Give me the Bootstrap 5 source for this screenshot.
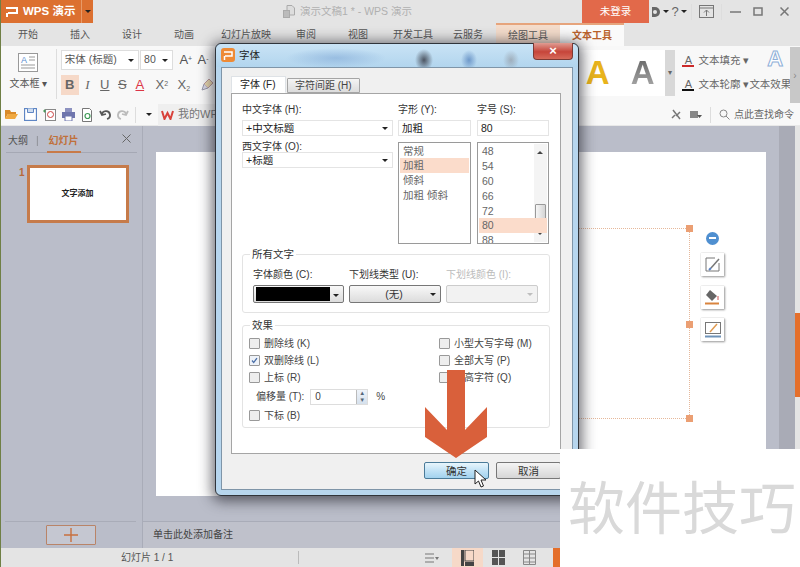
<!DOCTYPE html>
<html lang="zh-CN">
<head>
<meta charset="UTF-8">
<title>WPS 演示 - 字体</title>
<link href="https://cdn.jsdelivr.net/npm/bootstrap@5.3.3/dist/css/bootstrap.min.css" rel="stylesheet">
<style>
  html, body { width: 800px; height: 567px; overflow: hidden; }
  body { font-family: "Liberation Sans", "Noto Sans CJK SC", sans-serif; font-size: 10px; color: #555; background: #e4e4e4; position: relative; }
  .app { width: 800px; height: 567px; border-left: 1px solid #6f7f45; }

  /* title bar */
  .titlebar { height: 23px; background: #e4e4e4; }
  .wps-btn { width: 92px; height: 23px; background: #dc7030; color: #fff; font-size: 11.5px; font-weight: 700; }
  .wps-btn .caret-box { width: 12px; border-left: 1px solid #e89a68; height: 23px; }
  .wps-caret { border-top-color: #fff; }
  .doc-title { width: 489px; color: #b0b0b0; font-size: 10.5px; padding-left: 190px; gap: 5px; white-space: nowrap; }
  .login-btn { width: 67px; height: 23px; background: #e2694a; color: #fff; font-size: 10.5px; }
  .win-tools { display: grid; grid-template-columns: 14px 6px 12px 6px 8px 22px 8px 21px 23px 31px; flex: 1; height: 23px; align-items: center; justify-items: center; color: #666; font-size: 13px; }

  /* tabs */
  .tabrow { height: 23px; display: grid; grid-template-columns: 1px 52px 52px 52px 52px 72px 48px 56px 54px 56px 64px 64px; background: #e4e4e4; font-size: 10px; text-align: center; line-height: 23px; color: #555; }
  .tab-draw { background: #f4dccb; border-top: 2px solid #e6a47c; line-height: 21px; }
  .tab-text { background: #fafafa; border-top: 2px solid #e6a47c; line-height: 21px; color: #b9622d; font-weight: 700; }

  /* ribbon */
  .ribbon { height: 58px; background: #f8f8f8; }
  .rb-box { width: 56px; border-right: 1px solid #ddd; margin-top: 3px; height: 50px; }
  .rb-font { width: 155px; padding: 4px 0 0 4px; }
  .rb-combo { height: 20px; border: 1px solid #ddd; background: #fff; font-size: 10.5px; padding-left: 3px; white-space: nowrap; }
  .rb-face { width: 81px; }
  .rb-size { width: 34px; margin-left: 1px; }
  .rb-grow { width: 18px; font-size: 13px; color: #555; text-align: center; }
  .rb-fmt { display: grid; grid-template-columns: 18px 17px 18px 17px 18px 26px 18px 30px; justify-items: center; align-items: center; height: 18px; margin-top: 5px; font-size: 13px; color: #666; }
  .fmt-b { width: 18px; background: #f6d9c8; font-weight: 700; text-align: center; }
  .fmt-i { font-family: "Liberation Serif", serif; }
  .fmt-sup { font-size: 7px; }
  .gallery { margin-left: 368px; width: 86px; height: 46px; background: #fff; margin-top: 4px; font-size: 33px; font-weight: 700; line-height: 46px; }
  .gold-a { color: #e8b31c; margin-left: 6px; }
  .grey-a { background: linear-gradient(#555, #bbb); -webkit-background-clip: text; background-clip: text; color: transparent; margin-left: 21px; }
  .gal-more { width: 10px; height: 46px; background: #d8d8d8; margin-top: 4px; color: #666; font-size: 8px; }
  .rb-fill { width: 115px; font-size: 10.5px; padding: 2px 0 0 7px; color: #666; line-height: 24px; overflow: hidden; white-space: nowrap; }
  .fill-a { width: 12px; height: 12px; line-height: 11px; text-align: center; font-size: 11px; margin-right: 4px; display: inline-block; }
  .fill-red { border-bottom: 2px solid #cc2a2a; }
  .fill-blk { border-bottom: 2px solid #111; }
  .fx-a { font-size: 22px; font-weight: 700; line-height: 22px; color: #fff; -webkit-text-stroke: 1px #8fb0d8; margin-right: 7px; }
  .rb-side { width: 10px; height: 56px; background: #c8c8c8; color: #888; margin-top: 1px; }

  /* quick access */
  .quickbar { height: 22px; background: #f8f8f8; padding: 0 6px 0 4px; border-bottom: 1px solid #e8e8e8; gap: 6px; }
  .quickbar > * { flex: none; }
  .qa-sep { width: 1px; height: 16px; background: #ddd; }
  .qa-wps { width: 70px; height: 22px; background: #efefef; font-size: 11px; color: #777; padding-left: 3px; white-space: nowrap; }
  .qa-right { font-size: 10px; color: #666; white-space: nowrap; }

  /* workspace */
  .workspace { height: 422px; background: #babdc9; }
  .left-pane { width: 142px; border-right: 1px solid #a9acb8; }
  .pane-head { height: 27px; margin: 0 5px; border-bottom: 1px solid #a5a8b4; font-size: 10px; padding: 0 2px; line-height: 29px; color: #555; }
  .pane-on { color: #c0703a; font-weight: 700; border-bottom: 2px solid #c87a48; height: 27px; padding: 0 2px; }
  .thumb-wrap { padding: 12px 0 0 18px; color: #b8683a; font-weight: 700; font-size: 10px; }
  .thumb { width: 102px; height: 58px; margin-left: 2px; border: 3px solid #c67b4a; background: #fff; color: #222; font-weight: 700; font-size: 8px; }
  .pane-foot { height: 27px; margin: 0 6px 0 4px; border-top: 1px solid #a9acb8; }
  .add-btn { width: 50px; height: 20px; padding: 0; border: 1px solid #b98468; border-radius: 1px; background: #c5c7d1; line-height: 16px; }
  .main-pane { width: 657px; }
  .canvas-row { height: 395px; }
  .canvas { width: 623px; padding: 26px 0 0 13px; }
  .slide { width: 610px; height: 344px; background: #fff; position: relative; }
  .sel-frame { position: absolute; left: 330px; top: 76px; width: 204px; height: 191px; border: 1px dotted #e6b89a; }
  .handle { position: absolute; width: 7px; height: 7px; background: #eb9f73; }
  .h-a { right: -4px; top: -4px; }
  .h-b { right: -4px; top: 92px; }
  .h-c { right: -4px; bottom: -4px; }
  .minus-dot { position: absolute; left: 550px; top: 80px; width: 13px; height: 13px; border-radius: 50%; background: #4f8fd0; }
  .minus-dot::after { content: ""; position: absolute; left: 3px; top: 5px; width: 7px; height: 2px; background: #fff; }
  .float-btn { position: absolute; left: 545px; width: 23px; height: 23px; background: #fff; box-shadow: 1px 1px 2px #999, 0 0 1px #bbb; }
  .fb-1 { top: 101px; }
  .fb-2 { top: 134px; }
  .fb-3 { top: 166px; }
  .track-a { width: 13px; background: #babdc9; }
  .track-b { width: 16px; background: #a9abb6; }
  .track-c { width: 5px; background: #e4e4e4; position: relative; }
  .side-tab { position: absolute; left: 0; top: 187px; width: 5px; height: 84px; background: #e46f2b; }
  .notes { height: 27px; border-top: 1px solid #a9acb8; padding-left: 10px; line-height: 26px; font-size: 10px; color: #444; background: #bfc1cb; }

  /* status bar */
  .statusbar { height: 19px; background: #e4e4e4; font-size: 10px; color: #555; }
  .st-count { width: 297px; padding-left: 120px; }
  .st-sep { width: 1px; height: 13px; background: #bbb; }
  .st-order { margin-left: 126px; width: 27px; }
  .st-view { width: 31px; height: 19px; }
  .st-view-on { background: #f6d9c8; }
  .st-orange { width: 7px; height: 19px; background: #e46f2b; margin-left: 8px; }

  /* dialog */
  .fdlg { position: absolute; left: 215px; top: 43px; width: 364px; height: 453px; border: 1px solid #30343a; border-radius: 6px; box-shadow: 0 2px 14px 3px rgba(30, 30, 40, .65); background: #b7d6ee; padding: 0 5px 6px; color: #333; font-size: 10px; }
  .fdlg-title { height: 23px; margin: 0 -5px; padding: 4px 0 0 5px; border-radius: 6px 6px 0 0; font-size: 10.5px; color: #222; gap: 4px; background:
      radial-gradient(ellipse 9px 11px at 208px 16px, rgba(40, 40, 50, .75), transparent),
      radial-gradient(ellipse 8px 10px at 253px 16px, rgba(50, 100, 170, .55), transparent),
      radial-gradient(ellipse 8px 10px at 295px 16px, rgba(120, 110, 110, .4), transparent),
      radial-gradient(ellipse 50px 10px at 120px 14px, rgba(130, 170, 215, .6), transparent),
      linear-gradient(#c9e3f5, #b2d5ee); }
  .fdlg-logo { width: 14px; height: 14px; border-radius: 3px; background: #ee8a35; }
  .fdlg-close { position: absolute; right: 5px; top: -1px; width: 40px; height: 17px; border: 1px solid #7d3a34; border-top: 0; border-radius: 0 0 4px 4px; background: linear-gradient(#e09c92, #c6453a 55%, #d66a5a); color: #fff; font-size: 13px; font-weight: 700; line-height: 15px; text-align: center; }
  .fdlg-client { height: 423px; background: #f0f0f0; border: 1px solid #7f95a8; padding: 9px 11px 0 9px; }
  .fdlg-tabs { height: 16px; border: 0; gap: 1px; position: relative; z-index: 1; font-size: 10px; }
  .fdlg-tabs .nav-link { border: 1px solid #a5a5a5; border-radius: 1px 1px 0 0; padding: 0 0 0 7px; color: #444; background: linear-gradient(#f4f4f4, #dcdcdc); height: 15px; line-height: 14px; margin-top: 1px; width: 73px; }
  .fdlg-tabs .nav-link.active { background: #fff; border-bottom-color: #fff; height: 17px; margin-top: -1px; width: 55px; color: #222; line-height: 16px; padding-left: 8px; }
  .fdlg-panel { height: 361px; background: #fff; border: 1px solid #a5a5a5; padding: 10px 10px 0 10px; }
  .fnt-grid { display: grid; grid-template-columns: 151px 73px 73px; column-gap: 5px; }
  .fnt-size { margin-left: 1px; }
  .fnt-label { height: 16px; line-height: 12px; color: #333; white-space: nowrap; }
  .fnt-label2 { height: 11px; line-height: 11px; margin-top: 5px; }
  .fnt-combo { height: 16px; border: 1px solid #e4e4e4; padding-left: 3px; font-size: 10.5px; line-height: 14px; color: #222; background: #fff; }
  .caret-dn { width: 0; height: 0; border-left: 3px solid transparent; border-right: 3px solid transparent; border-top: 3px solid #222; margin-right: 4px; }
  .fnt-list { height: 102px; margin-top: 6px; border: 1px solid #9a9a9a; border-radius: 0; padding-top: 1px; overflow: hidden; position: relative; }
  .fnt-list .list-group-item { border: 0; border-radius: 0; padding: 0 0 0 3px; height: 15px; line-height: 15px; font-size: 10.5px; color: #666; background: transparent; margin: 0 1px; flex: none; }
  .fnt-list .list-group-item.active { background: #fbdccb; color: #666; }
  .fnt-scroll { position: absolute; right: 1px; top: 1px; bottom: 1px; width: 13px; background: #f4f4f4; }
  .fnt-thumb { position: absolute; left: 1px; top: 60px; width: 11px; height: 16px; border: 1px solid #999; border-radius: 1px; background: linear-gradient(90deg, #f6f6f6, #d5d5d5); }
  .sb-up, .sb-dn { position: absolute; left: 3px; width: 0; height: 0; border-left: 3px solid transparent; border-right: 3px solid transparent; }
  .sb-up { top: 7px; border-bottom: 3px solid #444; }
  .sb-dn { bottom: 7px; border-top: 3px solid #444; }
  .fgroup { position: relative; border: 1px solid #e3e3e3; border-radius: 3px; margin-top: 10px; }
  .fgroup-all { height: 59px; padding: 14px 0 0 10px; }
  .fgroup-fx { height: 103px; margin-top: 12px; padding: 9px 0 0 6px; }
  .fgroup-name { position: absolute; left: 7px; top: -7px; padding: 0 2px; background: #fff; font-size: 10.5px; line-height: 13px; color: #333; }
  .sel-grid { display: grid; grid-template-columns: 91px 92px 92px; column-gap: 5px; }
  .sel-off { color: #bbb; }
  .sel-box { height: 18px; border: 1px solid #777; border-radius: 2px; background: linear-gradient(#f8f8f8, #dcdcdc); }
  .sel-box-off { border-color: #ccc; background: #f2f2f2; }
  .swatch { width: 74px; height: 14px; margin: 1px 0 0 2px; background: #000; }
  .sel-name { flex: 1; text-align: center; padding-left: 8px; line-height: 15px; font-size: 10.5px; }
  .fx-grid { display: grid; grid-template-columns: 190px 1fr; }
  .fx-row { height: 17px; gap: 4px; white-space: nowrap; color: #444; }
  .fx-row .form-check-input { width: 11px; height: 11px; margin: 0; border: 1px solid #999; border-radius: 1px; background-color: #eee; flex: none; }
  .fx-row .form-check-input:checked { background-color: #eef2f8; border-color: #999; background-image: url("data:image/svg+xml,%3csvg xmlns='http://www.w3.org/2000/svg' viewBox='0 0 11 11'%3e%3cpath fill='none' stroke='%234a6fa8' stroke-width='1.6' d='M2.5 5.5l2 2.5 4-5.5'/%3e%3c/svg%3e"); }
  .fx-off { height: 21px; padding-left: 7px; gap: 4px; color: #444; }
  .off-input { width: 58px; height: 16px; border: 1px solid #ddd; padding-left: 4px; margin-left: 2px; font-size: 10px; line-height: 14px; }
  .off-spin { width: 11px; margin-left: auto; height: 14px; background: linear-gradient(#eef3f9, #d5e0ec); border-left: 1px solid #bbb; color: #567; font-size: 6px; line-height: 7px; text-align: center; }
  .fdlg-foot { padding-top: 8px; gap: 7px; }
  .fdlg-foot .btn { width: 65px; height: 17px; padding: 0; font-size: 10.5px; line-height: 14px; border-radius: 2px; border: 1px solid #777; color: #333; background: linear-gradient(#f4f4f4, #d6d6d6); }
  .fdlg-foot .btn-ok { border-color: #4b7b99; background: linear-gradient(#e8f5fc, #bfe1f5 55%, #a2d2ee); }

  /* overlays */
  .big-arrow { position: absolute; left: 425px; top: 370px; }
  .cursor-svg { position: absolute; left: 474px; top: 469px; }
  .stamp { position: absolute; left: 560px; top: 449px; width: 240px; height: 118px; background: #fff; color: #d9d9d9; font-family: "Noto Sans CJK SC", sans-serif; font-size: 57px; line-height: 1; padding: 27px 0 0 8px; white-space: nowrap; }
</style>
</head>
<body>
<div class="app d-flex flex-column">

  <div class="titlebar d-flex align-items-center">
    <div class="wps-btn d-flex align-items-center">
      <svg class="ms-1 me-1" width="14" height="12" viewBox="0 0 14 12"><path d="M1 2h11v5H3" fill="none" stroke="#fff" stroke-width="2"/><path d="M2 7v4" stroke="#fff" stroke-width="2"/></svg>
      <span class="flex-grow-1">WPS 演示</span>
      <span class="caret-box d-flex align-items-center justify-content-center"><span class="caret-dn m-0 wps-caret"></span></span>
    </div>
    <div class="doc-title d-flex align-items-center">
      <svg width="12" height="13" viewBox="0 0 12 13"><path d="M4 .5h5l2.500 2.500v7H4z" fill="#ddd" stroke="#aaa"/><rect x=".5" y="5.500" width="6" height="7" fill="#bbb" stroke="#aaa"/></svg>
      <span>演示文稿1 * - WPS 演示</span>
    </div>
    <div class="login-btn d-flex align-items-center justify-content-center">未登录</div>
    <div class="win-tools">
      <svg width="10" height="12" viewBox="0 0 10 12"><path d="M1 1h3a5 5 0 0 1 0 10H1z" fill="#666"/><circle cx="4" cy="6" r="2" fill="#e4e4e4"/></svg>
      <span class="caret-dn m-0"></span>
      <span>?</span>
      <span class="caret-dn m-0"></span>
      <span class="qa-sep"></span>
      <svg width="15" height="13" viewBox="0 0 15 13"><rect x=".5" y=".5" width="14" height="12" fill="none" stroke="#777"/><path d="M.5 3h14M7.500 11V5M5 7.500 7.500 5 10 7.500" fill="none" stroke="#777"/></svg>
      <span class="qa-sep"></span>
      <svg width="11" height="11" viewBox="0 0 11 11"><path d="M0 6h11" stroke="#777" stroke-width="1.500"/></svg>
      <svg width="10" height="9" viewBox="0 0 10 9"><rect x="1" y="1" width="8" height="7" fill="none" stroke="#777" stroke-width="1.500"/></svg>
      <svg width="9" height="9" viewBox="0 0 9 9"><path d="M.5.500l8 8M8.500.5l-8 8" stroke="#777" stroke-width="1.500"/></svg>
    </div>
  </div>

  <div class="tabrow">
    <span></span><span>开始</span><span>插入</span><span>设计</span><span>动画</span><span>幻灯片放映</span><span>审阅</span><span>视图</span><span>开发工具</span><span>云服务</span>
    <span class="tab-draw">绘图工具</span><span class="tab-text">文本工具</span>
  </div>

  <div class="ribbon d-flex">
    <div class="rb-box d-flex flex-column align-items-center">
      <svg class="mt-1" width="20" height="19" viewBox="0 0 20 19"><rect x=".5" y=".5" width="19" height="18" fill="#fff" stroke="#999"/><text x="3" y="10" font-size="9" fill="#5b8ed0" font-family="Liberation Sans">A</text><path d="M11 4h6M11 7h6M3 12h14M3 15h14" stroke="#999"/></svg>
      <span class="mt-1">文本框 ▾</span>
    </div>
    <div class="rb-font">
      <div class="d-flex align-items-center">
        <div class="rb-combo rb-face d-flex align-items-center justify-content-between">宋体 (标题)<span class="caret-dn"></span></div>
        <div class="rb-combo rb-size d-flex align-items-center justify-content-between">80<span class="caret-dn"></span></div>
        <span class="rb-grow ms-1">A<sup class="fmt-sup">+</sup></span>
        <span class="rb-grow">A<sup class="fmt-sup">-</sup></span>
      </div>
      <div class="rb-fmt">
        <span class="fmt-b">B</span><i class="fmt-i">I</i><u>U</u><s>S</s><u class="text-danger">A</u><span>X<sup class="fmt-sup">2</sup></span><span>X<sub class="fmt-sup">2</sub></span>
        <svg width="13" height="14" viewBox="0 0 13 14"><path d="M8 1l4 4-5 5-4-4z" fill="#ead9b0" stroke="#b99"/><path d="M3 6l-2 6 6-2" fill="#d8d8e8" stroke="#99a"/></svg>
      </div>
    </div>
    <div class="gallery d-flex align-items-center"><span class="gold-a">A</span><span class="grey-a">A</span></div>
    <div class="gal-more d-flex align-items-center justify-content-center">▾</div>
    <div class="rb-fill">
      <div class="d-flex justify-content-between"><span><span class="fill-a fill-red">A</span>文本填充 ▾</span><span class="fx-a">A</span></div>
      <div class="d-flex justify-content-between"><span><span class="fill-a fill-blk">A</span>文本轮廓 ▾</span><span>文本效果</span></div>
    </div>
    <div class="rb-side d-flex align-items-center justify-content-center">›</div>
  </div>

  <div class="quickbar d-flex align-items-center">
    <svg width="13" height="11" viewBox="0 0 13 11"><path d="M0 1h5l1 2h5v2H3L0 10z" fill="#d98a2a"/><path d="M3 5h10l-3 5H0z" fill="#f0a840"/></svg>
    <svg width="13" height="13" viewBox="0 0 13 13"><rect x=".5" y=".5" width="12" height="12" fill="#fff" stroke="#5f86c4" stroke-width="1.300"/><path d="M3.500.5v4h6v-4" fill="#cddcf0" stroke="#5f86c4"/></svg>
    <svg width="13" height="13" viewBox="0 0 13 13"><rect x="2.500" y="1.500" width="10" height="11" fill="#fff" stroke="#888"/><circle cx="7.500" cy="6.500" r="3" fill="none" stroke="#c44"/><path d="M0 3h3M1.500 1.500v3" stroke="#4a9a5a"/></svg>
    <svg width="13" height="13" viewBox="0 0 13 13"><rect x="3" y="0" width="7" height="4" fill="#8d92c0"/><rect x="0" y="4" width="13" height="6" fill="#6f76ad"/><rect x="3" y="8" width="7" height="5" fill="#fff" stroke="#6f76ad"/></svg>
    <svg width="12" height="14" viewBox="0 0 12 14"><path d="M1.500.5h7l2 2v11h-9z" fill="#fff" stroke="#777"/><circle cx="6.500" cy="8" r="2.500" fill="none" stroke="#3d9a55" stroke-width="1.200"/></svg>
    <svg width="12" height="11" viewBox="0 0 12 11"><path d="M3 6a4 4 0 1 1 5 4M1 2l2 4 4-1" fill="none" stroke="#555" stroke-width="1.800"/></svg>
    <svg width="12" height="11" viewBox="0 0 12 11"><path d="M9 6a4 4 0 1 0-5 4M11 2L9 6 5 5" fill="none" stroke="#bbb" stroke-width="1.800"/></svg>
    <span class="qa-sep"></span>
    <span class="caret-dn m-0 ms-1"></span>
    <div class="qa-wps d-flex align-items-center">
      <svg class="me-1 flex-shrink-0" width="13" height="10" viewBox="0 0 13 10"><path d="M1 1l2.500 8L6.500 3l3 6L12 1" fill="none" stroke="#d8413a" stroke-width="2"/></svg>我的WPS
    </div>
    <div class="qa-right d-flex align-items-center ms-auto">
      <svg width="11" height="11" viewBox="0 0 11 11"><path d="M2 1l7 9M9 3l-4 4M1 9l3-3" stroke="#777" stroke-width="1.500" fill="none"/></svg>
      <svg class="ms-2" width="12" height="10" viewBox="0 0 12 10"><rect x="0" y="1" width="8" height="7" fill="#888"/><path d="M7 5h5l-2.500 3z" fill="#555"/></svg>
      <span class="qa-sep ms-2"></span>
      <svg class="ms-2" width="11" height="11" viewBox="0 0 11 11"><circle cx="4.500" cy="4.500" r="3.500" fill="none" stroke="#888"/><path d="M7 7l3.500 3.500" stroke="#888"/></svg>
      <span class="ms-1">点此查找命令</span>
    </div>
  </div>

  <div class="workspace d-flex">
    <div class="left-pane d-flex flex-column">
      <div class="pane-head d-flex align-items-start gap-2">
        <span>大纲</span><span class="opacity-50">|</span><span class="pane-on">幻灯片</span>
        <svg class="ms-auto mt-2 me-1" width="9" height="9" viewBox="0 0 9 9"><path d="M.5.500l8 8M8.500.5l-8 8" stroke="#666"/></svg>
      </div>
      <div class="thumb-wrap d-flex flex-grow-1">
        <span>1</span>
        <div class="thumb d-flex align-items-center justify-content-center">文字添加</div>
      </div>
      <div class="pane-foot d-flex justify-content-center align-items-center">
        <button type="button" class="btn add-btn d-flex align-items-center justify-content-center" aria-label="添加">
          <svg width="14" height="14" viewBox="0 0 14 14"><path d="M7 0v14M0 7h14" stroke="#c8703e" stroke-width="1.400"/></svg>
        </button>
      </div>
    </div>
    <div class="main-pane d-flex flex-column">
      <div class="canvas-row d-flex">
        <div class="canvas">
          <div class="slide">
            <div class="sel-frame">
              <span class="handle h-a"></span><span class="handle h-b"></span><span class="handle h-c"></span>
            </div>
            <span class="minus-dot"></span>
            <div class="float-btn fb-1 d-flex align-items-center justify-content-center">
              <svg width="15" height="15" viewBox="0 0 15 15"><path d="M10 1H1v13h13V6" fill="none" stroke="#777"/><path d="M14 2L6 11" stroke="#777" stroke-width="1.500"/><path d="M6 11l-2 2" stroke="#5a80c0" stroke-width="2"/></svg>
            </div>
            <div class="float-btn fb-2 d-flex align-items-center justify-content-center">
              <svg width="15" height="15" viewBox="0 0 15 15"><path d="M5 0l7 6-5 5-6-6z" fill="#666"/><path d="M13 6v4" stroke="#c55"/><path d="M0 13.500h14" stroke="#d9843e" stroke-width="2"/></svg>
            </div>
            <div class="float-btn fb-3 d-flex align-items-center justify-content-center">
              <svg width="16" height="16" viewBox="0 0 16 16"><rect x=".5" y=".5" width="15" height="11" fill="none" stroke="#777"/><path d="M12 2L5 10" stroke="#e09a50" stroke-width="1.500"/><path d="M0 14.500h16" stroke="#6f93b8" stroke-width="2"/></svg>
            </div>
          </div>
        </div>
        <div class="track-a"></div>
        <div class="track-b"></div>
        <div class="track-c"><span class="side-tab"></span></div>
      </div>
      <div class="notes">单击此处添加备注</div>
    </div>
  </div>

  <div class="statusbar d-flex align-items-center">
    <div class="st-count">幻灯片 1 / 1</div>
    <span class="st-sep"></span>
    <div class="st-order d-flex">
      <svg width="14" height="10" viewBox="0 0 14 10"><path d="M0 1h9M0 5h9M0 9h9" stroke="#777"/><path d="M10 4h4l-2 3z" fill="#777"/></svg>
    </div>
    <div class="st-view st-view-on d-flex align-items-center justify-content-center">
      <svg width="13" height="16" viewBox="0 0 13 16"><rect x="0" y="0" width="3" height="16" fill="#444"/><rect x="4" y="0" width="9" height="11" fill="none" stroke="#444"/><rect x="4" y="12" width="9" height="4" fill="#444"/></svg>
    </div>
    <div class="st-view d-flex align-items-center justify-content-center">
      <svg width="13" height="15" viewBox="0 0 13 15"><path d="M0 0h6v7H0zM7 0h6v7H7zM0 8h6v7H0zM7 8h6v7H7z" fill="#555"/></svg>
    </div>
    <div class="st-view d-flex align-items-center justify-content-center">
      <svg width="13" height="15" viewBox="0 0 13 15"><path d="M.5.500h12v14H.5zM6.500.5v14M.5 4h12M.5 8h12M.5 12h12" fill="none" stroke="#888"/></svg>
    </div>
    <span class="st-orange"></span>
  </div>
</div>

<!-- font dialog -->
<div class="fdlg">
  <div class="fdlg-title d-flex align-items-start">
    <span class="fdlg-logo d-flex align-items-center justify-content-center">
      <svg width="10" height="9" viewBox="0 0 10 9"><path d="M1 1h8v4H2M1.500 5v4" fill="none" stroke="#fff" stroke-width="1.500"/></svg>
    </span>
    <span>字体</span>
  </div>
  <div class="fdlg-close">×</div>
  <div class="fdlg-client">
    <ul class="nav nav-tabs fdlg-tabs">
      <li class="nav-item"><a class="nav-link active" href="#">字体 (F)</a></li>
      <li class="nav-item"><a class="nav-link" href="#">字符间距 (H)</a></li>
    </ul>
    <div class="fdlg-panel">
      <div class="fnt-grid">
        <div>
          <div class="fnt-label">中文字体 (H):</div>
          <div class="fnt-combo d-flex align-items-center justify-content-between">+中文标题<span class="caret-dn"></span></div>
          <div class="fnt-label fnt-label2">西文字体 (O):</div>
          <div class="fnt-combo d-flex align-items-center justify-content-between">+标题<span class="caret-dn"></span></div>
        </div>
        <div>
          <div class="fnt-label">字形 (Y):</div>
          <div class="fnt-combo">加粗</div>
          <div class="list-group fnt-list">
            <div class="list-group-item">常规</div>
            <div class="list-group-item active">加粗</div>
            <div class="list-group-item">倾斜</div>
            <div class="list-group-item">加粗 倾斜</div>
          </div>
        </div>
        <div class="fnt-size">
          <div class="fnt-label">字号 (S):</div>
          <div class="fnt-combo">80</div>
          <div class="list-group fnt-list">
            <div class="list-group-item">48</div>
            <div class="list-group-item">54</div>
            <div class="list-group-item">60</div>
            <div class="list-group-item">66</div>
            <div class="list-group-item">72</div>
            <div class="list-group-item active">80</div>
            <div class="list-group-item">88</div>
            <div class="fnt-scroll"><span class="sb-up"></span><span class="fnt-thumb"></span><span class="sb-dn"></span></div>
          </div>
        </div>
      </div>

      <div class="fgroup fgroup-all">
        <span class="fgroup-name">所有文字</span>
        <div class="sel-grid">
          <div class="fnt-label">字体颜色 (C):</div>
          <div class="fnt-label">下划线类型 (U):</div>
          <div class="fnt-label sel-off">下划线颜色 (I):</div>
          <div class="sel-box d-flex align-items-start justify-content-between"><span class="swatch"></span><span class="caret-dn mt-2"></span></div>
          <div class="sel-box d-flex align-items-center"><span class="sel-name">(无)</span><span class="caret-dn"></span></div>
          <div class="sel-box sel-box-off d-flex align-items-center justify-content-end"><span class="caret-dn opacity-25"></span></div>
        </div>
      </div>

      <div class="fgroup fgroup-fx">
        <span class="fgroup-name">效果</span>
        <div class="fx-grid">
          <div>
            <label class="fx-row d-flex align-items-center"><input class="form-check-input" type="checkbox">删除线 (K)</label>
            <label class="fx-row d-flex align-items-center"><input class="form-check-input" type="checkbox" checked>双删除线 (L)</label>
            <label class="fx-row d-flex align-items-center"><input class="form-check-input" type="checkbox">上标 (R)</label>
            <div class="fx-off d-flex align-items-center">偏移量 (T):
              <div class="off-input d-flex align-items-center">0<span class="off-spin">▲<br>▼</span></div>
              <span class="ms-1">%</span>
            </div>
            <label class="fx-row d-flex align-items-center"><input class="form-check-input" type="checkbox">下标 (B)</label>
          </div>
          <div>
            <label class="fx-row d-flex align-items-center"><input class="form-check-input" type="checkbox">小型大写字母 (M)</label>
            <label class="fx-row d-flex align-items-center"><input class="form-check-input" type="checkbox">全部大写 (P)</label>
            <label class="fx-row d-flex align-items-center"><input class="form-check-input" type="checkbox">提高字符 (Q)</label>
          </div>
        </div>
      </div>
    </div>
    <div class="fdlg-foot d-flex justify-content-end">
      <button type="button" class="btn btn-ok">确定</button>
      <button type="button" class="btn">取消</button>
    </div>
  </div>
</div>

<svg class="big-arrow" width="62" height="88" viewBox="0 0 62 88"><path d="M22 0h18v60l22-23v30L31 88 0 67V37l22 23z" fill="#d9603b"/></svg>
<svg class="cursor-svg" width="13" height="20" viewBox="0 0 13 20"><path d="M1 1v14l3.500-3 2.500 6 2.500-1-2.500-6H12z" fill="#fff" stroke="#222"/></svg>
<div class="stamp">软件技巧</div>
</body>
</html>
